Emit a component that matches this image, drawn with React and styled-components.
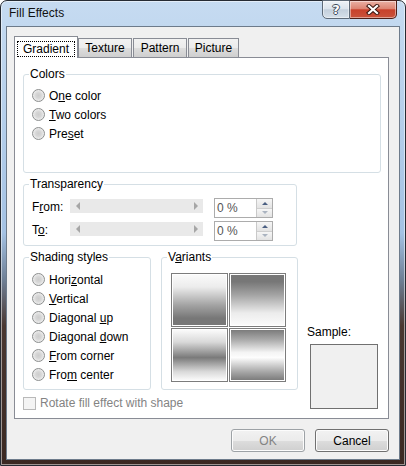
import styled, { createGlobalStyle } from "styled-components";

const GlobalStyle = createGlobalStyle`
  html, body {
    margin: 0;
    padding: 0;
  }
  body {
    background: #fff;
    font-family: "Liberation Sans", Arial, sans-serif;
    font-size: 12px;
    color: #000;
  }
  * {
    box-sizing: border-box;
  }
`;

const Window = styled.div`
  width: 406px;
  height: 466px;
  border: 1px solid #262b33;
  border-radius: 7px 7px 0 0;
  padding: 0 5px 5px;
  display: flex;
  flex-direction: column;
  background: linear-gradient(
    180deg,
    #c6dbf1 0%,
    #b5cfeb 25%,
    #a4c2e4 50%,
    #6f8096 60%,
    #4a3731 70%,
    #3a2822 100%
  );
  box-shadow: inset 0 0 0 1px rgba(255, 255, 255, 0.5);
`;

const TitleBar = styled.div`
  height: 25px;
  display: flex;
  justify-content: space-between;
  align-items: flex-start;
  padding-left: 3px;
`;

const Title = styled.span`
  line-height: 25px;
  color: #111;
`;

const Controls = styled.div`
  display: flex;
  margin-top: -1px;
  margin-right: 3px;
`;

const CaptionButton = styled.div`
  height: 19px;
  width: ${(p) => (p.$close ? "47px" : "28px")};
  display: flex;
  align-items: center;
  justify-content: center;
  border: 1px solid ${(p) => (p.$close ? "#4d1f18" : "#5e6a78")};
  border-left-width: ${(p) => (p.$close ? "0" : "1px")};
  border-radius: ${(p) => (p.$close ? "0 0 5px 0" : "0 0 0 5px")};
  background: ${(p) =>
    p.$close
      ? "linear-gradient(180deg, #eab1a5 0%, #dd8472 45%, #c8412b 52%, #c9533c 100%)"
      : "linear-gradient(180deg, #eef2f7 0%, #dce4ed 45%, #c3cfdc 52%, #d6e0ea 100%)"};
  box-shadow: inset 0 0 0 1px rgba(255, 255, 255, 0.45);
`;

const HelpGlyph = styled.span`
  font-family: "DejaVu Sans", sans-serif;
  font-weight: bold;
  font-size: 13px;
  line-height: 13px;
  color: #fff;
  text-shadow: 1px 0 #3d4a5a, -1px 0 #3d4a5a, 0 1px #3d4a5a, 0 -1px #3d4a5a;
`;

const Client = styled.div`
  flex: 1;
  display: flex;
  flex-direction: column;
  padding: 9px 10px 7px 7px;
  border: 1px solid #6d7b8b;
  background: #f0f0f0;
`;

const TabStrip = styled.div`
  height: 21px;
  display: flex;
  align-items: flex-end;
`;

const Tab = styled.div`
  position: relative;
  z-index: ${(p) => (p.$active ? 2 : 1)};
  width: ${(p) => p.$w}px;
  height: ${(p) => (p.$active ? 22 : 19)}px;
  margin-bottom: ${(p) => (p.$active ? "-1px" : "0")};
  margin-left: ${(p) => (p.$gap ? "1px" : "0")};
  border: 1px solid #898c95;
  border-bottom: none;
  background: ${(p) =>
    p.$active
      ? "#fff"
      : "linear-gradient(180deg, #f2f2f2 0%, #ebebeb 50%, #dddddd 51%, #cfcfcf 100%)"};
  display: flex;
  justify-content: center;
  align-items: ${(p) => (p.$active ? "flex-start" : "center")};
  padding-top: ${(p) => (p.$active ? "4px" : "0")};
  line-height: 17px;
`;

const Focus = styled.span`
  flex: 1;
  margin: 0 2px;
  height: 16px;
  line-height: 14px;
  border: 1px dotted #000;
  text-align: center;
`;

const Panel = styled.div`
  height: 362px;
  border: 1px solid #898c95;
  background: #fff;
  padding: 0 7px 0 8px;
  display: flex;
  flex-direction: column;
  align-items: flex-start;
`;

const Group = styled.div`
  position: relative;
  flex: none;
  width: ${(p) => p.$w}px;
  height: ${(p) => p.$h}px;
  margin-top: ${(p) => p.$mt || 0}px;
  border: 1px solid #d5dfe5;
  border-radius: 3px;
  padding: ${(p) => p.$pad};
`;

const GroupLabel = styled.span`
  position: absolute;
  top: -8px;
  left: 5px;
  padding: 0 1px;
  background: #fff;
  line-height: 14px;
`;

const RadioRow = styled.div`
  height: 19px;
  display: flex;
  align-items: center;
  gap: 4px;
  white-space: nowrap;
`;

const Radio = styled.span`
  flex: none;
  width: 13px;
  height: 13px;
  border-radius: 50%;
  border: 1px solid #8c8e8e;
  background: radial-gradient(
    circle at 50% 50%,
    #cdcdcd 0%,
    #d6d6d6 35%,
    #ececec 70%,
    #f9f9f9 100%
  );
`;

const TransRow = styled.div`
  height: 20px;
  display: flex;
  align-items: flex-start;
  & + & {
    margin-top: 3px;
  }
`;

const TransLabel = styled.span`
  width: 38px;
  line-height: 18px;
`;

const Scroll = styled.div`
  width: 133px;
  height: 14px;
  margin-top: 1px;
  background: #e9e9e9;
  display: flex;
  justify-content: space-between;
  align-items: center;
  padding: 0 5px 0 6px;
`;

const Arrow = styled.span`
  width: 0;
  height: 0;
  border-top: 4px solid transparent;
  border-bottom: 4px solid transparent;
  border-${(p) => (p.$dir === "left" ? "right" : "left")}: 4px solid #a6a6a6;
`;

const NumBox = styled.div`
  width: 59px;
  height: 20px;
  margin-left: 11px;
  border: 1px solid #acacac;
  display: flex;
  background: #fff;
`;

const NumText = styled.span`
  flex: 1;
  padding-left: 2px;
  line-height: 18px;
  color: #555;
`;

const Spin = styled.div`
  width: 16px;
  display: flex;
  flex-direction: column;
  border-left: 1px solid #c9c9c9;
`;

const SpinBtn = styled.div`
  flex: 1;
  display: flex;
  align-items: center;
  justify-content: center;
  background: linear-gradient(180deg, #f6f6f6 0%, #e3e3e3 100%);
  & + & {
    border-top: 1px solid #cfcfcf;
  }
`;

const SpinArrow = styled.span`
  width: 0;
  height: 0;
  border-left: 3px solid transparent;
  border-right: 3px solid transparent;
  ${(p) =>
    p.$up
      ? "border-bottom: 3px solid #4a5f82;"
      : "border-top: 3px solid #aab3c0;"}
`;

const Lower = styled.div`
  display: flex;
  margin-top: 11px;
`;

const LeftCol = styled.div`
  display: flex;
  flex-direction: column;
`;

const GroupRow = styled.div`
  display: flex;
  gap: 10px;
`;

const SwatchGrid = styled.div`
  display: grid;
  grid-template-columns: 57px 57px;
  grid-template-rows: 54px 54px;
  gap: 1px;
`;

const Swatch = styled.div`
  border: 1px solid #7c7c7c;
  box-shadow: inset 0 0 0 1px #fff;
  background: ${(p) => p.$bg};
`;

const CheckRow = styled.div`
  margin-top: 7px;
  height: 13px;
  display: flex;
  align-items: center;
  gap: 4px;
  color: #838383;
  line-height: 13px;
`;

const CheckBox = styled.span`
  width: 13px;
  height: 13px;
  border: 1px solid #b9b9b9;
  background: #f4f4f4;
`;

const SampleCol = styled.div`
  margin-left: 9px;
  padding-bottom: 1px;
  display: flex;
  flex-direction: column;
  justify-content: flex-end;
`;

const SampleLabel = styled.span`
  line-height: 14px;
  margin-bottom: 5px;
`;

const SampleBox = styled.div`
  width: 68px;
  height: 65px;
  margin-left: 3px;
  border: 1px solid #707070;
  background: #f0f0f0;
`;

const Footer = styled.div`
  margin-top: 10px;
  display: flex;
  justify-content: flex-end;
  gap: 10px;
`;

const Button = styled.div`
  width: 74px;
  height: 23px;
  border: 1px solid ${(p) => (p.$disabled ? "#9da2a6" : "#707070")};
  border-radius: 3px;
  background: linear-gradient(180deg, #f2f2f2 0%, #ebebeb 50%, #dddddd 51%, #cfcfcf 100%);
  box-shadow: inset 0 0 0 1px #fcfcfc;
  display: flex;
  align-items: center;
  justify-content: center;
  color: ${(p) => (p.$disabled ? "#838383" : "#000")};
`;

const colorOptions = [
  ["O", "n", "e color"],
  ["", "T", "wo colors"],
  ["Pre", "s", "et"],
];

const shadingOptions = [
  ["Hori", "z", "ontal"],
  ["", "V", "ertical"],
  ["Diagonal ", "u", "p"],
  ["Diagonal ", "d", "own"],
  ["", "F", "rom corner"],
  ["Fro", "m", " center"],
];

const swatches = [
  "linear-gradient(180deg, #fbfbfb 0%, #ececec 25%, #a3a3a3 60%, #777 85%, #777 100%)",
  "linear-gradient(180deg, #777 0%, #777 15%, #a3a3a3 40%, #ececec 75%, #fbfbfb 100%)",
  "linear-gradient(180deg, #fdfdfd 0%, #d9d9d9 25%, #7a7a7a 55%, #d9d9d9 82%, #fdfdfd 100%)",
  "linear-gradient(180deg, #777 0%, #a8a8a8 20%, #f4f4f4 45%, #fdfdfd 55%, #a8a8a8 82%, #777 100%)",
];

const Label = ({ parts }) => (
  <span>
    {parts[0]}
    <u>{parts[1]}</u>
    {parts[2]}
  </span>
);

const CloseIcon = () => (
  <svg width="14" height="11" viewBox="0 0 14 11">
    <path d="M3 2 L11 9 M11 2 L3 9" stroke="#3b1711" strokeWidth="4.2" strokeLinecap="square" />
    <path d="M3 2 L11 9 M11 2 L3 9" stroke="#fff" strokeWidth="2.2" strokeLinecap="square" />
  </svg>
);

const TransparencyRow = ({ parts }) => (
  <TransRow>
    <TransLabel>
      <Label parts={parts} />
    </TransLabel>
    <Scroll>
      <Arrow $dir="left" />
      <Arrow $dir="right" />
    </Scroll>
    <NumBox>
      <NumText>0 %</NumText>
      <Spin>
        <SpinBtn>
          <SpinArrow $up />
        </SpinBtn>
        <SpinBtn>
          <SpinArrow />
        </SpinBtn>
      </Spin>
    </NumBox>
  </TransRow>
);

export default function App() {
  return (
    <>
      <GlobalStyle />
      <Window>
        <TitleBar>
          <Title>Fill Effects</Title>
          <Controls>
            <CaptionButton>
              <HelpGlyph>?</HelpGlyph>
            </CaptionButton>
            <CaptionButton $close>
              <CloseIcon />
            </CaptionButton>
          </Controls>
        </TitleBar>
        <Client>
          <TabStrip>
            <Tab $active $w={64}>
              <Focus>Gradient</Focus>
            </Tab>
            <Tab $w={54}>Texture</Tab>
            <Tab $w={54} $gap>
              Pattern
            </Tab>
            <Tab $w={51} $gap>
              Picture
            </Tab>
          </TabStrip>
          <Panel>
            <Group $w={358} $h={99} $mt={16} $pad="11px 0 0 8px">
              <GroupLabel>Colors</GroupLabel>
              {colorOptions.map((o) => (
                <RadioRow key={o.join("")}>
                  <Radio />
                  <Label parts={o} />
                </RadioRow>
              ))}
            </Group>
            <Group $w={274} $h={62} $mt={11} $pad="13px 0 0 8px">
              <GroupLabel>Transparency</GroupLabel>
              <TransparencyRow parts={["F", "r", "om:"]} />
              <TransparencyRow parts={["T", "o", ":"]} />
            </Group>
            <Lower>
              <LeftCol>
                <GroupRow>
                  <Group $w={128} $h={133} $pad="12px 0 0 8px">
                    <GroupLabel>Shading styles</GroupLabel>
                    {shadingOptions.map((o) => (
                      <RadioRow key={o.join("")}>
                        <Radio />
                        <Label parts={o} />
                      </RadioRow>
                    ))}
                  </Group>
                  <Group $w={137} $h={133} $pad="15px 0 0 9px">
                    <GroupLabel>
                      <Label parts={["V", "a", "riants"]} />
                    </GroupLabel>
                    <SwatchGrid>
                      {swatches.map((bg) => (
                        <Swatch key={bg} $bg={bg} />
                      ))}
                    </SwatchGrid>
                  </Group>
                </GroupRow>
                <CheckRow>
                  <CheckBox />
                  <span>Rotate fill effect with shape</span>
                </CheckRow>
              </LeftCol>
              <SampleCol>
                <SampleLabel>Sample:</SampleLabel>
                <SampleBox />
              </SampleCol>
            </Lower>
          </Panel>
          <Footer>
            <Button $disabled>OK</Button>
            <Button>Cancel</Button>
          </Footer>
        </Client>
      </Window>
    </>
  );
}
